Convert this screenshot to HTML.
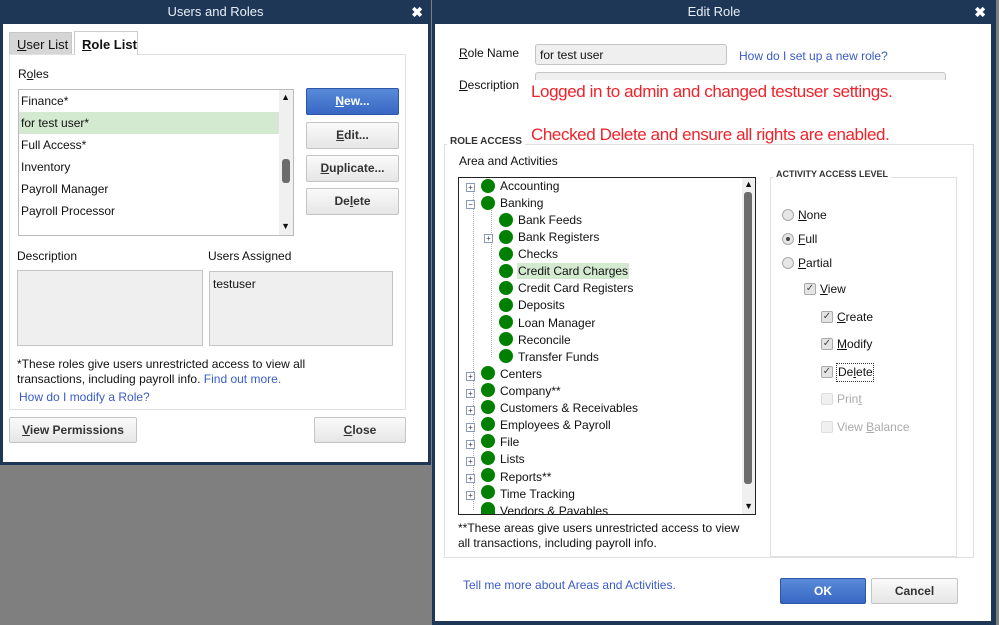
<!DOCTYPE html>
<html><head><style>
*{margin:0;padding:0;box-sizing:border-box}
body{width:999px;height:625px;background:#7f7f7f;position:relative;overflow:hidden;font-family:"Liberation Sans",Arial,sans-serif;font-size:12px;color:#111}
.a{position:absolute;white-space:nowrap}
.dlg{position:absolute;background:#1e3757}
.title{position:absolute;left:0;right:0;top:0;height:24px;color:#e8eef5;font-size:13px;text-align:center;line-height:24px}
.x{position:absolute;right:8px;top:0;color:#fff;font-weight:bold;font-size:14px;line-height:24px}
.inner{position:absolute;background:#fff}
.btn{position:absolute;background:linear-gradient(#fafafa,#e6e6e6);border:1px solid #c4c4c4;border-radius:2px;text-align:center;font-weight:bold;color:#333;font-size:12px}
.blue{background:linear-gradient(#5a8ad8,#3767c4);border:1px solid #2c56a8;color:#fff}
.link{color:#3a5bc7}
u{text-decoration:underline}
.gb{position:absolute;border:1px solid #e0e0e0}
.dot{position:absolute;width:14px;height:14px;border-radius:50%;background:#008000}
.pm{position:absolute;width:9px;height:9px;border:1px solid #8a9bb5;background:#fff;font-size:8px;line-height:7px;text-align:center;color:#334}
.cb{position:absolute;width:12px;height:12px;border:1px solid #aaa;background:#e4e4e4;border-radius:2px;font-size:10px;line-height:10px;text-align:center;color:#444}
.rd{position:absolute;width:12px;height:12px;border:1px solid #aaa;border-radius:50%;background:#e6e6e6}
.red{color:#f0222a;font-size:17px;font-family:"Liberation Sans",sans-serif;letter-spacing:-0.4px}
</style></head><body>

<div class="dlg" style="left:0;top:0;width:431px;height:465px">
 <div class="title">Users and Roles</div><div class="x">✖</div>
 <div class="inner" style="left:3px;top:24px;width:425px;height:438px"></div>
</div>
<div class="a" style="left:9px;top:32px;width:63px;height:22px;background:#d6d6d6;border:1px solid #c8c8c8;border-bottom:none;font-size:13px;padding:4px 0 0 7px"><u>U</u>ser List</div>
<div class="a" style="left:74px;top:31px;width:64px;height:24px;background:#fff;border:1px solid #ccc;border-bottom:none;font-size:13px;font-weight:bold;padding:5px 0 0 7px;z-index:2"><u>R</u>ole List</div>
<div class="gb" style="left:9px;top:54px;width:397px;height:356px"></div>
<div class="a" style="left:18px;top:67px;font-size:12px">R<u>o</u>les</div>
<div class="a" style="left:18px;top:89px;width:276px;height:147px;border:1px solid #bbb;background:#fff">
 <div class="a" style="left:0;top:22px;width:261px;height:22px;background:#d3ead1"></div>
 <div class="a" style="left:2px;top:0px;line-height:22px">Finance*<br>for test user*<br>Full Access*<br>Inventory<br>Payroll Manager<br>Payroll Processor</div>
 <div class="a" style="right:0;top:0;width:14px;height:145px;background:#f0f0f0"></div>
 <div class="a" style="right:3px;top:2px;font-size:9px">▲</div>
 <div class="a" style="right:3px;top:131px;font-size:9px">▼</div>
 <div class="a" style="right:3px;top:69px;width:8px;height:24px;background:#6c6c6c;border-radius:3px"></div>
</div>
<div class="btn blue" style="left:306px;top:88px;width:93px;height:27px;line-height:25px"><u>N</u>ew...</div>
<div class="btn" style="left:306px;top:122px;width:93px;height:27px;line-height:25px"><u>E</u>dit...</div>
<div class="btn" style="left:306px;top:155px;width:93px;height:27px;line-height:25px"><u>D</u>uplicate...</div>
<div class="btn" style="left:306px;top:188px;width:93px;height:27px;line-height:25px">De<u>l</u>ete</div>
<div class="a" style="left:17px;top:249px">Description</div>
<div class="a" style="left:208px;top:249px">Users Assigned</div>
<div class="a" style="left:17px;top:270px;width:186px;height:76px;background:#efefef;border:1px solid #c4c4c4"></div>
<div class="a" style="left:209px;top:271px;width:184px;height:75px;background:#efefef;border:1px solid #c4c4c4;padding:5px 3px">testuser</div>
<div class="a" style="left:17px;top:357px;line-height:15px">*These roles give users unrestricted access to view all<br>transactions, including payroll info. <span class="link">Find out more.</span></div>
<div class="a link" style="left:19px;top:390px">How do I modify a Role?</div>
<div class="btn" style="left:9px;top:417px;width:128px;height:26px;line-height:24px"><u>V</u>iew Permissions</div>
<div class="btn" style="left:314px;top:417px;width:92px;height:26px;line-height:24px"><u>C</u>lose</div>

<div class="dlg" style="left:432px;top:0;width:564px;height:625px">
 <div class="title">Edit Role</div><div class="x" style="right:10px">✖</div>
 <div class="inner" style="left:3px;top:24px;width:556px;height:597px"></div>
</div>
<div class="a" style="left:459px;top:46px"><u>R</u>ole Name</div>
<div class="a" style="left:535px;top:44px;width:192px;height:21px;background:#efefef;border:1px solid #c4c4c4;border-radius:3px;padding:3px 4px">for test user</div>
<div class="a link" style="left:739px;top:49px">How do I set up a new role?</div>
<div class="a" style="left:459px;top:78px"><u>D</u>escription</div>
<div class="a" style="left:535px;top:72px;width:411px;height:8px;background:#efefef;border:1px solid #c4c4c4;border-bottom:none;border-radius:3px 3px 0 0"></div>
<div class="gb" style="left:444px;top:144px;width:530px;height:414px"></div>
<div class="a" style="left:447px;top:136px;background:#fff;padding:0 3px;font-size:10px;font-weight:bold;color:#333">ROLE ACCESS</div>
<div class="a red" style="left:531px;top:82px">Logged in to admin and changed testuser settings.</div>
<div class="a red" style="left:531px;top:125px">Checked Delete and ensure all rights are enabled.</div>
<div class="a" style="left:459px;top:154px">Area and Activities</div>
<div class="a" style="left:458px;top:177px;width:298px;height:338px;border:1px solid #222;background:#fff;overflow:hidden">
 <div class="a" style="right:0;top:0;width:13px;height:336px;background:#f0f0f0"></div>
 <div class="a" style="right:2px;top:1px;font-size:9px">▲</div>
 <div class="a" style="right:2px;top:323px;font-size:9px">▼</div>
 <div class="a" style="right:3px;top:14px;width:8px;height:292px;background:#6c6c6c;border-radius:3px"></div>
 <div class="a" style="left:14px;top:12px;height:320px;border-left:1px dotted #aaa"></div>
 <div class="a" style="left:32px;top:29px;height:150px;border-left:1px dotted #aaa"></div>
 <div class="a" style="left:58px;top:85px;width:112px;height:16px;background:#d3ead1"></div>
</div>
<div class="pm" style="left:466px;top:183px">+</div>
<div class="pm" style="left:466px;top:200px">−</div>
<div class="pm" style="left:484px;top:234px">+</div>
<div class="pm" style="left:466px;top:372px">+</div><div class="pm" style="left:466px;top:389px">+</div><div class="pm" style="left:466px;top:406px">+</div><div class="pm" style="left:466px;top:423px">+</div><div class="pm" style="left:466px;top:440px">+</div><div class="pm" style="left:466px;top:457px">+</div><div class="pm" style="left:466px;top:474px">+</div><div class="pm" style="left:466px;top:491px">+</div>
<div class="dot" style="left:481px;top:179px"></div><div class="dot" style="left:481px;top:196px"></div>
<div class="dot" style="left:499px;top:213px"></div><div class="dot" style="left:499px;top:230px"></div><div class="dot" style="left:499px;top:247px"></div><div class="dot" style="left:499px;top:264px"></div><div class="dot" style="left:499px;top:281px"></div><div class="dot" style="left:499px;top:298px"></div><div class="dot" style="left:499px;top:315px"></div><div class="dot" style="left:499px;top:332px"></div><div class="dot" style="left:499px;top:349px"></div>
<div class="dot" style="left:481px;top:366px"></div><div class="dot" style="left:481px;top:383px"></div><div class="dot" style="left:481px;top:400px"></div><div class="dot" style="left:481px;top:417px"></div><div class="dot" style="left:481px;top:434px"></div><div class="dot" style="left:481px;top:451px"></div><div class="dot" style="left:481px;top:468px"></div><div class="dot" style="left:481px;top:485px"></div>
<div class="a" style="left:500px;top:178px;line-height:17.1px;font-size:12px">Accounting<br>Banking</div>
<div class="a" style="left:518px;top:212px;line-height:17.1px;font-size:12px">Bank Feeds<br>Bank Registers<br>Checks<br>Credit Card Charges<br>Credit Card Registers<br>Deposits<br>Loan Manager<br>Reconcile<br>Transfer Funds</div>
<div class="a" style="left:500px;top:366px;line-height:17.1px;font-size:12px;height:148px;overflow:hidden">Centers<br>Company**<br>Customers &amp; Receivables<br>Employees &amp; Payroll<br>File<br>Lists<br>Reports**<br>Time Tracking<br>Vendors &amp; Payables</div>
<div class="dot" style="left:481px;top:502px;height:12px;border-radius:7px 7px 0 0"></div>
<div class="a" style="left:458px;top:521px;line-height:15px">**These areas give users unrestricted access to view<br>all transactions, including payroll info.</div>
<div class="gb" style="left:770px;top:177px;width:187px;height:380px"></div>
<div class="a" style="left:773px;top:169px;background:#fff;padding:0 3px;font-size:9px;font-weight:bold;color:#333">ACTIVITY ACCESS LEVEL</div>
<div class="rd" style="left:782px;top:209px"></div><div class="a" style="left:798px;top:208px"><u>N</u>one</div>
<div class="rd" style="left:782px;top:233px"><div class="a" style="left:3px;top:3px;width:4px;height:4px;border-radius:50%;background:#444"></div></div><div class="a" style="left:798px;top:232px"><u>F</u>ull</div>
<div class="rd" style="left:782px;top:257px"></div><div class="a" style="left:798px;top:256px"><u>P</u>artial</div>
<div class="cb" style="left:804px;top:283px">✓</div><div class="a" style="left:820px;top:282px"><u>V</u>iew</div>
<div class="cb" style="left:821px;top:311px">✓</div><div class="a" style="left:837px;top:310px"><u>C</u>reate</div>
<div class="cb" style="left:821px;top:338px">✓</div><div class="a" style="left:837px;top:337px"><u>M</u>odify</div>
<div class="cb" style="left:821px;top:366px">✓</div><div class="a" style="left:836px;top:363px;border:1px dotted #333;padding:1px 0 2px 1px">De<u>l</u>ete</div>
<div class="cb" style="left:821px;top:393px;background:#f0f0f0;border-color:#ddd"></div><div class="a" style="left:837px;top:392px;color:#aaa">Prin<u>t</u></div>
<div class="cb" style="left:821px;top:421px;background:#f0f0f0;border-color:#ddd"></div><div class="a" style="left:837px;top:420px;color:#aaa">View <u>B</u>alance</div>
<div class="a link" style="left:463px;top:578px">Tell me more about Areas and Activities.</div>
<div class="btn blue" style="left:780px;top:578px;width:86px;height:26px;line-height:24px">OK</div>
<div class="btn" style="left:871px;top:578px;width:87px;height:26px;line-height:24px">Cancel</div>
</body></html>
